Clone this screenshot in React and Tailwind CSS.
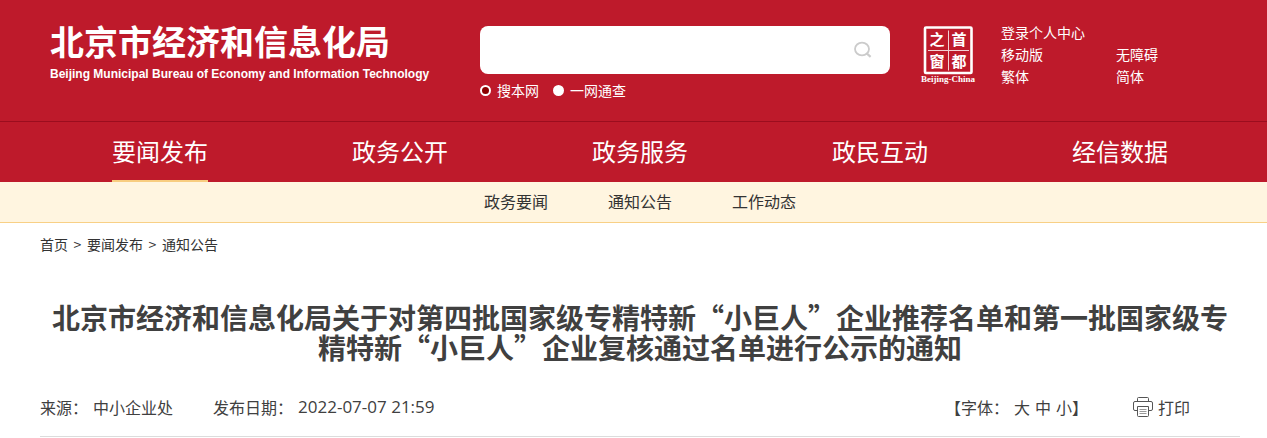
import React, { useState } from 'react'

const navItems = ['要闻发布', '政务公开', '政务服务', '政民互动', '经信数据']
const subItems = ['政务要闻', '通知公告', '工作动态']
const crumbs = ['首页', '要闻发布', '通知公告']
const sizes = ['大', '中', '小']

function SearchIcon() {
    return (
        <svg className="h-[18px] w-[18px]" viewBox="0 0 18 18" fill="none" stroke="#cbcbcb" strokeWidth="1.8">
            <ellipse cx="8" cy="8" rx="7" ry="6.4" />
            <path d="M12.4 12.2 L16.6 15.8" strokeWidth="2.2" />
        </svg>
    )
}

function PrinterIcon() {
    return (
        <svg className="h-5 w-5" viewBox="0 0 20 20" fill="none" stroke="#555" strokeWidth="1">
            <path d="M4.5 4.5 V1.5 Q4.5 0.5 5.5 0.5 H14.5 Q15.5 0.5 15.5 1.5 V4.5" />
            <path d="M4 13.5 H2 Q0.5 13.5 0.5 12 V6 Q0.5 4.5 2 4.5 H18 Q19.5 4.5 19.5 6 V12 Q19.5 13.5 18 13.5 H16" />
            <path d="M4.5 9.5 H15.5 V18.5 Q15.5 19.5 14.5 19.5 H5.5 Q4.5 19.5 4.5 18.5 Z" />
            <path d="M6.5 12.5 H13.5 M6.5 14.5 H13.5 M6.5 16.5 H13.5" stroke="#999" />
        </svg>
    )
}

function CapitalSeal() {
    return (
        <svg className="h-[60px] w-[56px]" viewBox="0 0 56 60" fill="#fff">
            <rect x="5" y="1.5" width="46.5" height="45.5" rx="1" fill="none" stroke="#fff" strokeWidth="2.6" />
            <path d="M28.5 4.5 V44.5 M8 24.5 H49" stroke="#fff" strokeWidth="1" opacity="0.8" />
            <g fontSize="15" fontWeight="700" textAnchor="middle">
                <text x="17" y="19">之</text>
                <text x="39" y="19">首</text>
                <text x="17" y="41">窗</text>
                <text x="39" y="41">都</text>
            </g>
            <text x="28" y="56" fontSize="9" fontWeight="700" textAnchor="middle" fontFamily="Liberation Serif, serif">Beijing-China</text>
        </svg>
    )
}

function Header() {
    const [scope, setScope] = useState('site')
    const radio = "h-[11px] w-[11px] appearance-none rounded-full border-2 border-white bg-white checked:bg-[#8b0000]"
    return (
        <header className="bg-[#be1a2b] text-white">
            <div className="flex items-start pt-[26px] pb-5 pl-10 pr-[27px]">
                <a href="#" className="block w-[440px] pl-[10px]">
                    <span className="block text-[34px] leading-[30px] font-bold whitespace-nowrap">北京市经济和信息化局</span>
                    <span className="mt-[10px] block font-['Liberation_Sans',sans-serif] text-[12px] leading-4 font-bold whitespace-nowrap">
                        Beijing Municipal Bureau of Economy and Information Technology
                    </span>
                </a>
                <form className="w-[410px]" onSubmit={(e) => e.preventDefault()}>
                    <div className="flex h-12 items-center rounded-lg bg-white pr-[18px]">
                        <input type="text" aria-label="搜索" className="h-full min-w-0 flex-1 px-4 text-base text-gray-700 outline-none" />
                        <button type="submit" aria-label="搜索">
                            <SearchIcon />
                        </button>
                    </div>
                    <div className="mt-[5px] flex gap-[14px] text-[14px] leading-[22px]">
                        <label className="flex items-center gap-[6px]">
                            <input type="radio" name="scope" className={radio} checked={scope === 'site'} onChange={() => setScope('site')} />
                            搜本网
                        </label>
                        <label className="flex items-center gap-[6px]">
                            <input type="radio" name="scope" className={radio} checked={scope === 'all'} onChange={() => setScope('all')} />
                            一网通查
                        </label>
                    </div>
                </form>
                <a href="#" className="ml-[30px]" aria-label="首都之窗">
                    <CapitalSeal />
                </a>
                <div className="-mt-[5px] ml-[25px] grid grid-cols-[115px_auto] text-[14px] leading-[22px]">
                    <a href="#" className="col-span-2">登录个人中心</a>
                    <a href="#">移动版</a>
                    <a href="#">无障碍</a>
                    <a href="#">繁体</a>
                    <a href="#">简体</a>
                </div>
            </div>
            <nav className="grid grid-cols-5 border-t border-[#9b0d1e] pl-10 pr-[27px] text-center text-[24px] leading-[58px]">
                {navItems.map((item, i) => (
                    <div key={item}>
                        <a href="#" className={i === 0 ? "inline-block border-b-2 border-[#f8cd80]" : "inline-block border-b-2 border-transparent"}>
                            {item}
                        </a>
                    </div>
                ))}
            </nav>
        </header>
    )
}

export default function App() {
    return (
        <div className="bg-white font-['Noto_Sans_CJK_SC',sans-serif] text-[#333]">
            <Header />
            <nav className="flex justify-center gap-[60px] border-b border-[#f8d086] bg-[#fff5e0] pb-[2px] pl-10 pr-[27px] text-[16px] leading-[38px]">
                {subItems.map((item) => (
                    <a key={item} href="#">{item}</a>
                ))}
            </nav>
            <main className="pl-10 pr-[27px]">
                <div className="flex gap-[5px] pt-[10px] text-[14px] leading-[22px]">
                    {crumbs.map((item, i) => (
                        <React.Fragment key={item}>
                            {i > 0 && <span className="w-[9px] text-center">&gt;</span>}
                            <a href="#">{item}</a>
                        </React.Fragment>
                    ))}
                </div>
                <h1 className="mt-[47px] text-center text-[28px] leading-[30px] font-bold text-[#404040]">
                    北京市经济和信息化局关于对第四批国家级专精特新“小巨人”企业推荐名单和第一批国家级专精特新“小巨人”企业复核通过名单进行公示的通知
                </h1>
                <div className="mt-[33px] flex items-center border-b border-[#dcdcdc] pb-[17px] text-[16px] leading-6 text-[#404040]">
                    <span>来源：</span>
                    <span className="ml-[5px]">中小企业处</span>
                    <span className="ml-10">发布日期：</span>
                    <span className="ml-[5px] font-['Open_Sans',sans-serif] text-[17px]">2022-07-07 21:59</span>
                    <div className="ml-auto flex">
                        <span>【字体：</span>
                        <span className="ml-[5px] flex gap-[5px]">
                            {sizes.map((s) => (
                                <button key={s} type="button">{s}</button>
                            ))}
                        </span>
                        <span>】</span>
                    </div>
                    <button type="button" className="mr-[50px] ml-[45px] flex items-center gap-[5px]">
                        <PrinterIcon />
                        打印
                    </button>
                </div>
            </main>
        </div>
    )
}
